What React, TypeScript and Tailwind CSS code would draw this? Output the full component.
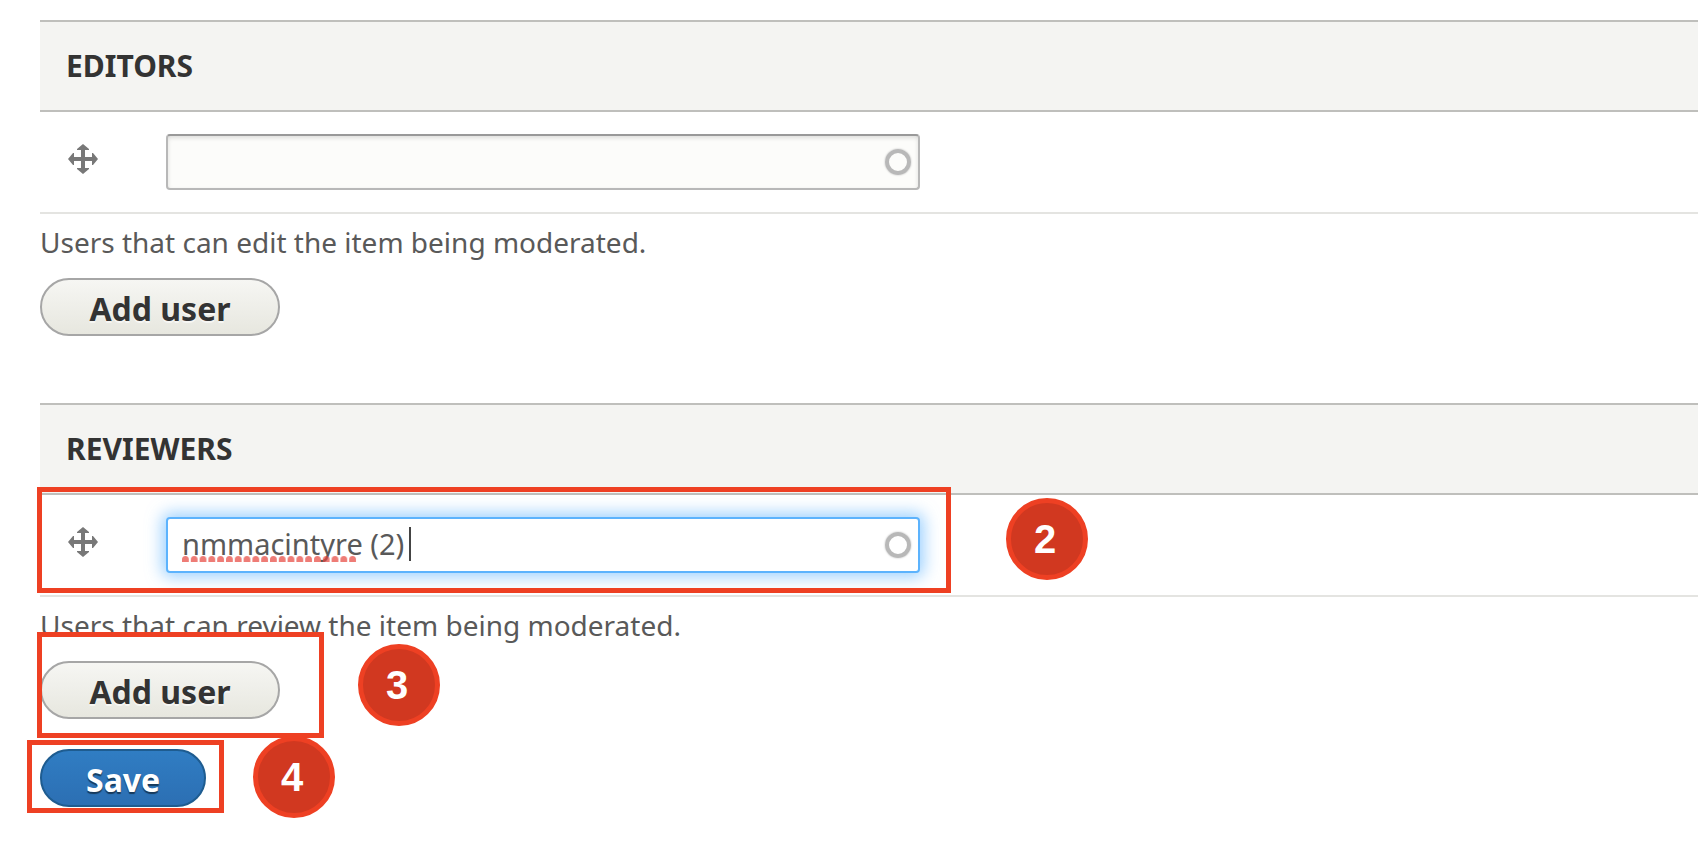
import React, { useState } from "react";

function MoveIcon() {
  return (
    <svg viewBox="0 0 30 30" className="h-[30px] w-[30px] fill-[#787878]" aria-hidden="true">
      <path d="M15 0 21 5V6H17V13H24V9H25L30 15 25 21H24V17H17V24H21V25L15 30 9 25V24H13V17H6V21H5L0 15 5 9H6V13H13V6H9V5Z" />
    </svg>
  );
}

function Callout({ label, place }: { label: string; place: string }) {
  return (
    <span
      className={`absolute flex h-[82px] w-[82px] items-center justify-center rounded-full border-[5px] border-[#ee4023] bg-[#d13820] pr-1 font-['Liberation_Sans',sans-serif] text-[40px] leading-none font-bold text-white ${place}`}
    >
      {label}
    </span>
  );
}

function Frame({ place }: { place: string }) {
  return <div className={`pointer-events-none absolute border-[5px] border-[#ee4023] ${place}`} />;
}

function SpellingMark() {
  return (
    <svg className="pointer-events-none absolute top-[39px] left-4 h-[6px] w-[176px]" aria-hidden="true">
      <defs>
        <pattern id="dots" width="8.8" height="6" patternUnits="userSpaceOnUse">
          <path d="M0 6V3.5Q0 0 3.4 0T6.8 3.5V6Z" fill="#e8453c" fillOpacity="0.7" />
        </pattern>
      </defs>
      <rect width="176" height="6" fill="url(#dots)" />
    </svg>
  );
}

type RoleProps = {
  title: string;
  help: string;
  initial?: string;
  active?: boolean;
};

function RoleTable({ title, help, initial = "", active = false }: RoleProps) {
  const [value, setValue] = useState(initial);
  const field = active
    ? "border-[#5cb3fd] bg-white shadow-[0_0_16px_4px_#5cb3fd99]"
    : "border-[#b8b8b8] border-t-[#999999] bg-[#fcfcfa] shadow-[inset_0_2px_4px_#00000020]";

  return (
    <section>
      <div className="relative">
        <table className="w-full border-collapse">
          <thead>
            <tr className="h-[90px] border-y-2 border-[#bfbfbc] bg-[#f4f4f2]">
              <th colSpan={2} className="px-[26px] text-left text-[30px] leading-9 font-bold text-[#333333] uppercase">
                {title}
              </th>
            </tr>
          </thead>
          <tbody>
            <tr className="border-b-2 border-[#e4e4e1]">
              <td className="w-[126px] pb-[6px] pl-7">
                <MoveIcon />
              </td>
              <td className="py-[22px]">
                <div className="relative w-[754px] max-w-full">
                  <input
                    type="text"
                    aria-label={title}
                    value={value}
                    onChange={(e) => setValue(e.target.value)}
                    className={`block h-14 w-full rounded-[4px] border-2 pr-12 pb-1 pl-[14px] text-[29px] text-[#595959] outline-none ${field}`}
                  />
                  <span className="pointer-events-none absolute top-[15px] right-[9px] h-[26px] w-[26px] rounded-full border-4 border-[#b8b8b8] shadow-[0_0_2px_#b8b8b8]" />
                  {active && <SpellingMark />}
                  {active && <span className="absolute top-[10px] left-[243px] h-[34px] w-[2px] bg-[#444444]" />}
                </div>
              </td>
            </tr>
          </tbody>
        </table>
        {active && <Frame place="top-[84px] -left-[3px] h-[106px] w-[914px]" />}
        {active && <Callout label="2" place="top-[95px] left-[966px]" />}
      </div>
      <p className="mt-[10px] text-[28px] leading-9 text-[#595959]">{help}</p>
      <div className="relative mt-[18px]">
        <button
          type="button"
          className="block h-[58px] min-w-60 rounded-full border-2 border-[#a6a6a6] bg-linear-to-b from-[#f6f6f3] to-[#e7e7df] px-11 pt-1 text-[32px] leading-9 font-bold text-[#333333] [text-shadow:0_2px_0_#ffffff99]"
        >
          Add user
        </button>
        {active && <Frame place="-top-[29px] -left-[3px] h-[106px] w-[287px]" />}
        {active && <Callout label="3" place="-top-[17px] left-[318px]" />}
      </div>
    </section>
  );
}

export default function App() {
  return (
    <form
      className="min-h-screen bg-white pt-5 pb-8 pl-10 font-['Noto_Sans',sans-serif]"
      onSubmit={(e) => e.preventDefault()}
    >
      <div className="flex flex-col gap-[67px]">
        <RoleTable title="Editors" help="Users that can edit the item being moderated." />
        <RoleTable
          title="Reviewers"
          help="Users that can review the item being moderated."
          initial="nmmacintyre (2)"
          active
        />
      </div>
      <div className="relative mt-[30px]">
        <button
          type="submit"
          className="block h-[58px] rounded-full border-2 border-[#1e5c90] bg-linear-to-b from-[#307dc3] to-[#2c6fb3] px-11 pt-1 text-[32px] leading-9 font-bold text-white [text-shadow:0_2px_1px_#00000080]"
        >
          Save
        </button>
        <Frame place="-top-[9px] -left-[13px] h-[73px] w-[197px]" />
        <Callout label="4" place="-top-[13px] left-[213px]" />
      </div>
    </form>
  );
}
